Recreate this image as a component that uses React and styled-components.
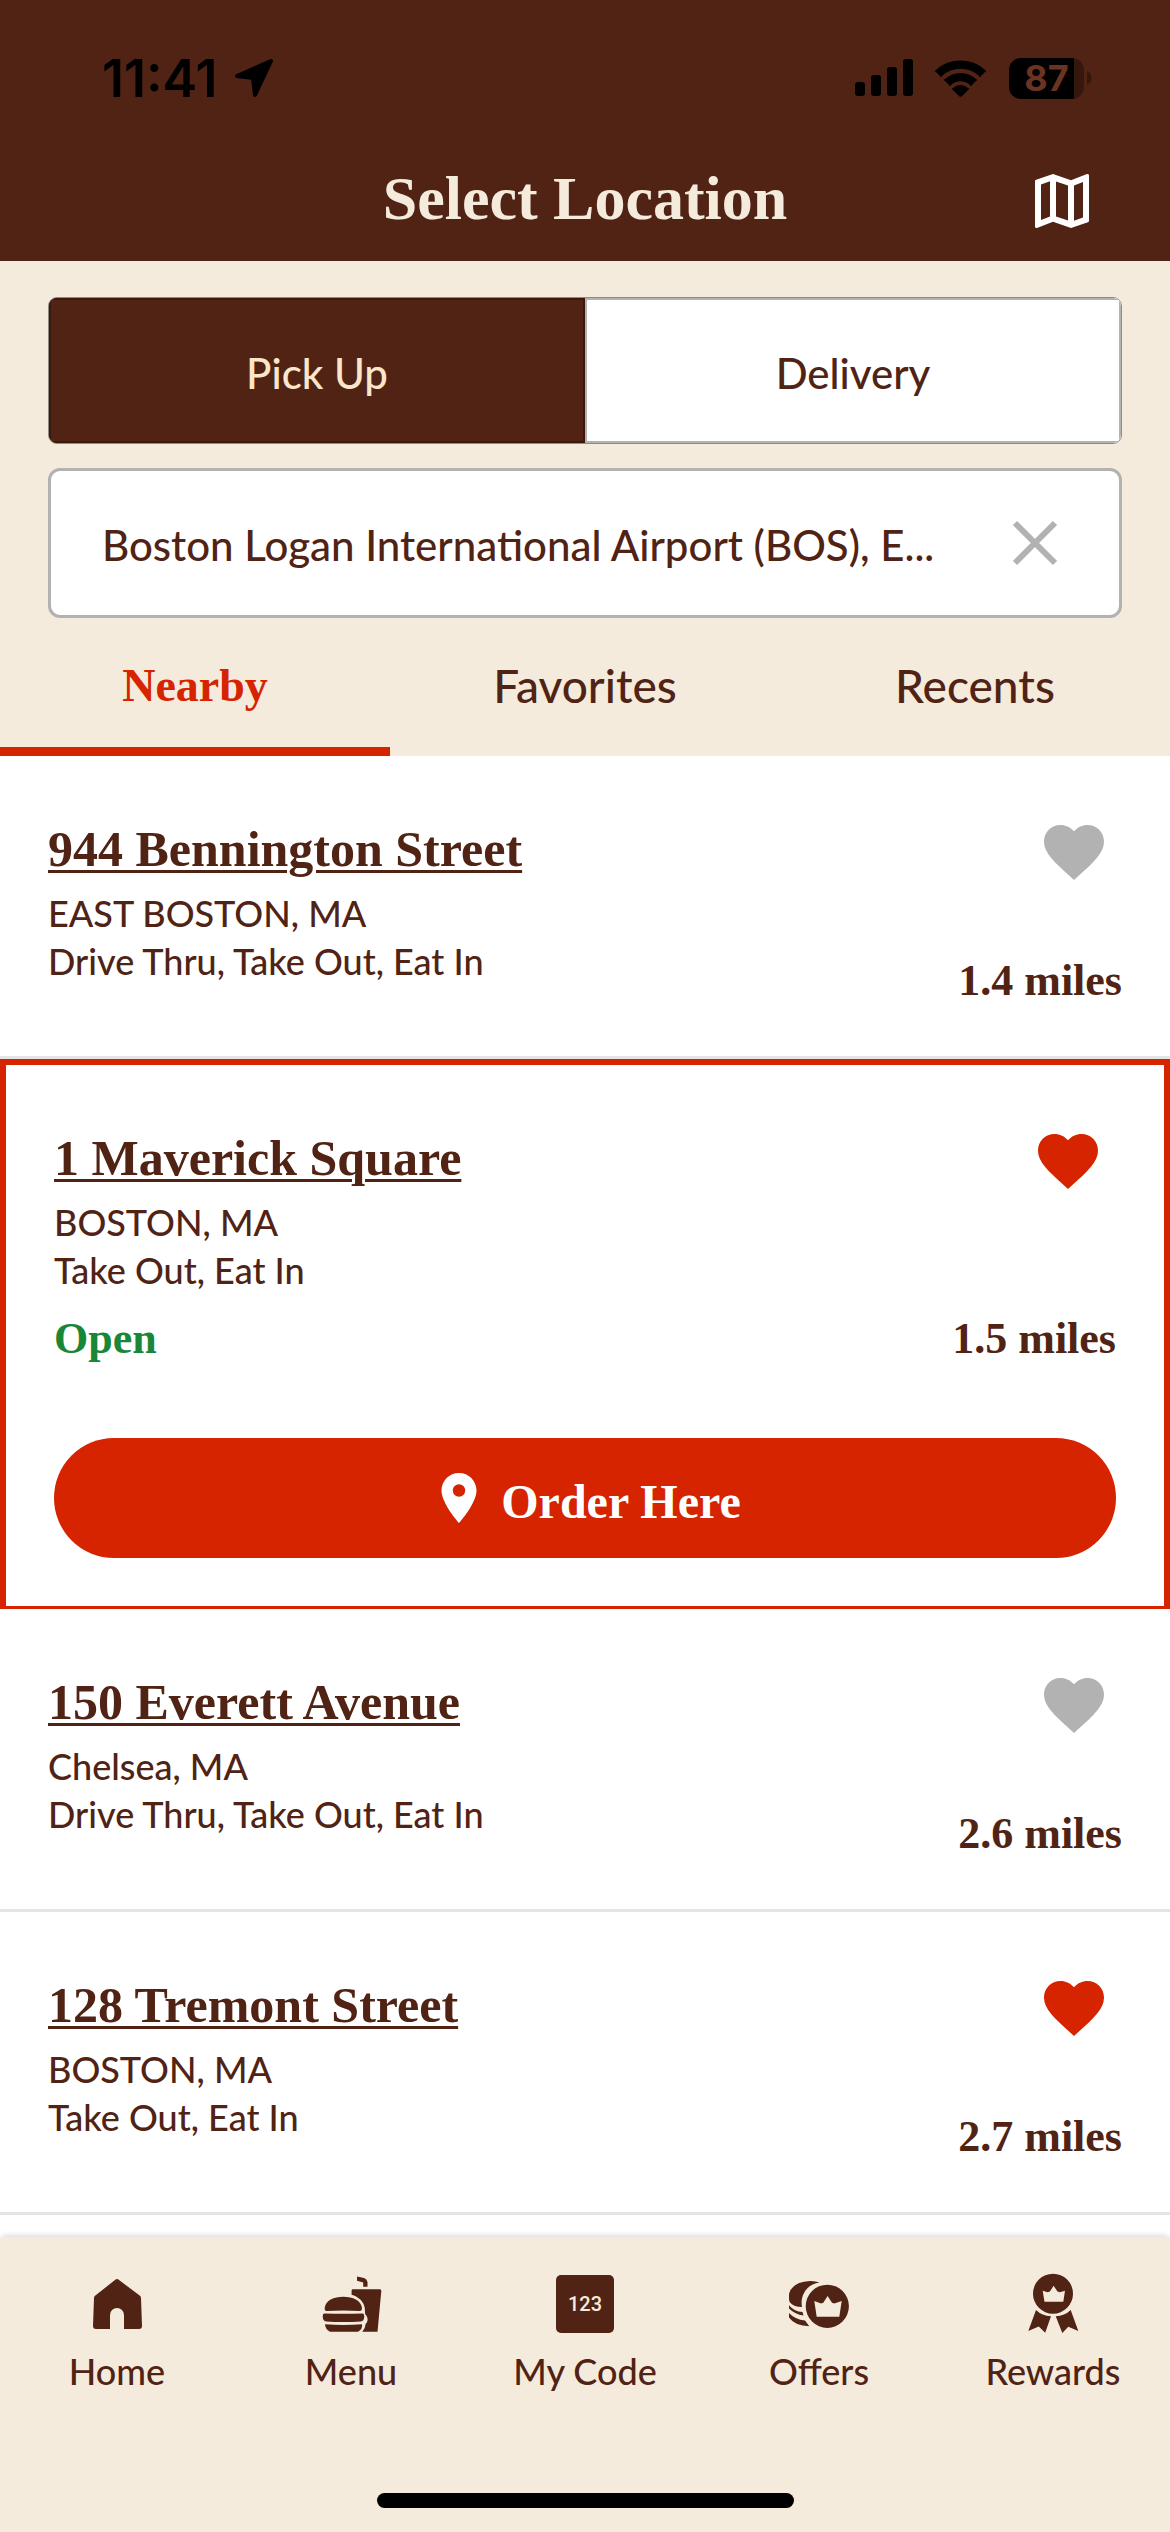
import React, { useState } from 'react';
import styled, { createGlobalStyle } from 'styled-components';
import { MdFavorite, MdOutlineMap, MdPlace } from 'react-icons/md';

const serif = `"Liberation Serif", "Times New Roman", serif`;
const sans = `Lato, "Liberation Sans", sans-serif`;

const restaurants = [
    { id: 1, street: "944 Bennington Street", city: "EAST BOSTON, MA", services: "Drive Thru, Take Out, Eat In", distance: "1.4 miles", favorite: false },
    { id: 2, street: "1 Maverick Square", city: "BOSTON, MA", services: "Take Out, Eat In", distance: "1.5 miles", favorite: true, status: "Open" },
    { id: 3, street: "150 Everett Avenue", city: "Chelsea, MA", services: "Drive Thru, Take Out, Eat In", distance: "2.6 miles", favorite: false },
    { id: 4, street: "128 Tremont Street", city: "BOSTON, MA", services: "Take Out, Eat In", distance: "2.7 miles", favorite: true },
];

const tabs = ["Nearby", "Favorites", "Recents"];

function StatusIcons() {
    return (
        <StatusGroup>
            <svg width="58" height="38" viewBox="0 0 58 38">
                <rect x="0" y="23" width="10" height="14" rx="3" />
                <rect x="16" y="16" width="10" height="21" rx="3" />
                <rect x="32" y="8" width="10" height="29" rx="3" />
                <rect x="48" y="0" width="10" height="37" rx="3" />
            </svg>
            <svg width="52" height="38" viewBox="0 0 52 38">
                <path d="M1 11a36 36 0 0 1 49 0 1 1 0 0 1 0 2l-4 4a1 1 0 0 1-2 0 27 27 0 0 0-37 0 1 1 0 0 1-2 0l-4-4a1 1 0 0 1 0-2z" />
                <path d="M10 20a23 23 0 0 1 31 0 1 1 0 0 1 0 2l-4 4a1 1 0 0 1-2 0 14 14 0 0 0-19 0 1 1 0 0 1-2 0l-4-4a1 1 0 0 1 0-2z" />
                <path d="M18 29a11 11 0 0 1 15 0 1 1 0 0 1 0 2l-6 6a2 2 0 0 1-3 0l-6-6a1 1 0 0 1 0-2z" />
            </svg>
            <Battery>
                <BatteryLevel>87</BatteryLevel>
                <svg width="5" height="14" viewBox="0 0 5 14">
                    <path d="M0 0c6 3 6 11 0 14z" fill="#35170d" />
                </svg>
            </Battery>
        </StatusGroup>
    );
}

function HomeIcon() {
    return (
        <svg width="72" height="72" viewBox="0 0 72 72" fill="currentColor">
            <path d="M34 12q2-2 4 0l20 15q2 1 2 3l1 28q0 3-3 3H43V47a7 7 0 0 0-14 0v14H15q-3 0-3-3l1-28q0-2 2-3z" />
        </svg>
    );
}

function MenuIcon() {
    return (
        <svg width="72" height="72" viewBox="0 0 72 72" fill="currentColor">
            <path d="M42 8.500l7 1.500q3 1 3.500 4v4.700h-4.300V14.500L42 12.700z" />
            <path d="M37.500 21.300H65q1.500 0 1.300 1.600L62.500 63.700H47.300q3-3 3.300-7.700 3-3 1.500-7-1-2-2-3 1-12-9-17.500-2-1.200-4.500-1.700v-4q0-1.500.9-1.500z" />
            <path d="M9.700 40c1-8 9-11.300 18.600-11.300S46 32 47 40q0 3-2 3-17-1-33.500 0-2 0-1.800-3z" />
            <path d="M8 46.500q.4-1.200 2-1.100 18.500.7 37 0 1.600 0 2 1.100.8 2.500-.3 5-.7 1.700-2.700 1.900-17.500 1-35 0-2-.2-2.700-1.900-1.100-2.500-.3-5z" />
            <path d="M10 56.300q18.500 1.200 37 0 1 4.700-4 7.400H15q-5-2.700-5-7.400z" />
        </svg>
    );
}

function OffersIcon() {
    return (
        <svg width="72" height="72" viewBox="0 0 72 72" fill="currentColor">
            <path fillRule="evenodd" d="M44.300 16.700a21.600 21.600 0 1 1 0 43.200 21.600 21.600 0 0 1 0-43.200zM31.300 33l2.400 15.700h22.600L58.700 33l-7.400 2.500-2.300-.7-4.400-6.700-4.300 6.700-2.300.7z" />
            <path d="M36.500 14.500Q22 17 19 30.500q-.8 4 0 8.500-8 0-12-4.500-1-1.500-1-4V26q3-12 21-13 5-.2 9.500 1.500z" />
            <path d="M6 37.200q5 6.200 13.500 6.800l1 3.500Q12 46.500 6 40.500z" />
            <path d="M6 45q6 6.500 16 7.500l4.300 5.700Q12 58 6 49.500z" />
        </svg>
    );
}

function RewardsIcon() {
    return (
        <svg width="72" height="72" viewBox="0 0 72 72" fill="currentColor">
            <path fillRule="evenodd" d="M36 5.700a20 20 0 1 1 0 40 20 20 0 0 1 0-40zM25.700 22.700l1.800 11h18.800l1.700-11-5.200 1.500-2.300-.7-3.900-5.700-3.700 5.700-2.300.7z" />
            <path d="M19 42q6 6 15 6.300l-5.800 16.400-6.500-6.300L11.300 63z" />
            <path d="M53.700 42q-6 6-15 6.300l6.600 16.800 6-6.300L61.300 63z" />
        </svg>
    );
}

function CodeTile() {
    return <Tile>123</Tile>;
}

const navItems = [
    { label: "Home", icon: <HomeIcon /> },
    { label: "Menu", icon: <MenuIcon /> },
    { label: "My Code", icon: <CodeTile /> },
    { label: "Offers", icon: <OffersIcon /> },
    { label: "Rewards", icon: <RewardsIcon /> },
];

function Restaurant({ item, onToggle }) {
    const selected = Boolean(item.status);

    return (
        <Row $selected={selected}>
            <Details>
                <Info>
                    <Street href="#">{item.street}</Street>
                    <Address>
                        {item.city}<br />{item.services}
                    </Address>
                    {item.status && <Status>{item.status}</Status>}
                </Info>
                <Side>
                    <HeartButton
                        type="button"
                        aria-label="Favorite"
                        aria-pressed={item.favorite}
                        $active={item.favorite}
                        onClick={() => onToggle(item.id)}
                    >
                        <MdFavorite />
                    </HeartButton>
                    <Distance>{item.distance}</Distance>
                </Side>
            </Details>
            {selected && (
                <OrderButton type="button">
                    <MdPlace />
                    <span>Order Here</span>
                </OrderButton>
            )}
        </Row>
    );
}

function App() {
    const [mode, setMode] = useState("Pick Up");
    const [tab, setTab] = useState("Nearby");
    const [search, setSearch] = useState("Boston Logan International Airport (BOS), E...");
    const [items, setItems] = useState(restaurants);

    const handleToggle = (id) => {
        setItems(items.map((item) => item.id === id ? { ...item, favorite: !item.favorite } : item));
    }

  return (
    <Page>
        <GlobalStyle />
        <Header>
            <StatusBar>
                <Clock>
                    11:41
                    <svg width="40" height="40" viewBox="0 0 40 40">
                        <path d="M37 3L3 18l16 2 2 17z" strokeWidth="4" stroke="#000" strokeLinejoin="round" />
                    </svg>
                </Clock>
                <StatusIcons />
            </StatusBar>
            <TitleBar>
                <h1>Select Location</h1>
                <MapButton type="button" aria-label="Map">
                    <MdOutlineMap />
                </MapButton>
            </TitleBar>
        </Header>
        <Filters>
            <Segments>
                {["Pick Up", "Delivery"].map((name) => (
                    <Segment key={name} type="button" aria-pressed={mode === name} $active={mode === name} onClick={() => setMode(name)}>
                        {name}
                    </Segment>
                ))}
            </Segments>
            <SearchBox>
                <input type="text" aria-label="Location" value={search} onChange={(e) => {setSearch(e.target.value)}} />
                <button type="button" aria-label="Clear" onClick={() => setSearch("")}>
                    <svg width="48" height="48" viewBox="0 0 48 48" stroke="#b2b2b2" strokeWidth="6">
                        <path d="M4 4l40 40M44 4L4 44" />
                    </svg>
                </button>
            </SearchBox>
        </Filters>
        <Tabs role="tablist">
            {tabs.map((name) => (
                <Tab key={name} type="button" role="tab" aria-selected={tab === name} $active={tab === name} onClick={() => setTab(name)}>
                    {name}
                </Tab>
            ))}
        </Tabs>
        <List>
            {items.map((item) => (
                <Restaurant key={item.id} item={item} onToggle={handleToggle} />
            ))}
        </List>
        <BottomBar>
            <Nav>
                {navItems.map((item) => (
                    <NavLink key={item.label} href="#">
                        {item.icon}
                        <span>{item.label}</span>
                    </NavLink>
                ))}
            </Nav>
            <HomeIndicator />
        </BottomBar>
    </Page>
  );
}

const GlobalStyle = createGlobalStyle`
    * {
        box-sizing: border-box;
    }
    body {
        margin: 0;
        background-color: #ffffff;
    }
    button, input {
        margin: 0;
        padding: 0;
        border: none;
        background: none;
        color: inherit;
        font: inherit;
    }
    button {
        cursor: pointer;
    }
    svg {
        display: block;
        flex-shrink: 0;
    }
`;

const Page = styled.div`
    display: flex;
    flex-direction: column;
    min-height: 100vh;
    color: #502314;
    font-family: ${sans};
    font-weight: 500;
`;

const Header = styled.header`
    background-color: #502314;
`;

const StatusBar = styled.div`
    display: flex;
    justify-content: space-between;
    align-items: center;
    height: 141px;
    padding: 15px 78px 0 102px;
    color: #000000;
    font-family: Inter, "Liberation Sans", sans-serif;
`;

const Clock = styled.div`
    display: flex;
    align-items: center;
    gap: 16px;
    font-size: 52px;
    font-weight: 600;
`;

const StatusGroup = styled.div`
    display: flex;
    align-items: center;
    gap: 22px;
`;

const Battery = styled.div`
    display: flex;
    align-items: center;
    gap: 3px;
`;

const BatteryLevel = styled.div`
    width: 75px;
    height: 41px;
    border-radius: 12px;
    background: linear-gradient(to right, #000000 65px, #35170d 65px);
    color: #6b3322;
    font-size: 36px;
    font-weight: 700;
    line-height: 41px;
    text-align: center;
`;

const TitleBar = styled.div`
    display: grid;
    grid-template-columns: 72px 1fr 72px;
    align-items: center;
    height: 120px;
    padding: 0 72px;
    h1 {
        grid-column: 2;
        margin: 0;
        padding-bottom: 6px;
        color: #f5ebdc;
        font-family: ${serif};
        font-size: 62px;
        font-weight: 700;
        line-height: 72px;
        text-align: center;
    }
`;

const MapButton = styled.button`
    color: #ffffff;
    font-size: 72px;
`;

const Filters = styled.div`
    display: flex;
    flex-direction: column;
    gap: 24px;
    padding: 36px 48px 0;
    background-color: #f5ebdc;
`;

const Segments = styled.div`
    display: grid;
    grid-template-columns: 1fr 1fr;
    height: 147px;
    border: 1px solid #8f8a84;
    border-radius: 9px;
    overflow: hidden;
`;

const Segment = styled.button`
    padding-top: 4px;
    border: 2px solid ${({ $active }) => ($active ? "#3b170c" : "#b2b2b2")};
    background-color: ${({ $active }) => ($active ? "#502314" : "#ffffff")};
    color: ${({ $active }) => ($active ? "#fbe6cc" : "#502314")};
    font-size: 42px;
    line-height: 48px;
`;

const SearchBox = styled.div`
    display: flex;
    align-items: center;
    gap: 24px;
    height: 150px;
    padding: 0 60px 0 51px;
    border: 3px solid #b2b2b2;
    border-radius: 12px;
    background-color: #ffffff;
    input {
        flex: 1;
        min-width: 0;
        padding-top: 4px;
        font-size: 42px;
        line-height: 48px;
        outline: none;
    }
`;

const Tabs = styled.div`
    display: grid;
    grid-template-columns: repeat(3, 1fr);
    height: 138px;
    background-color: #f5ebdc;
`;

const Tab = styled.button`
    padding-top: 6px;
    border-bottom: 9px solid ${({ $active }) => ($active ? "#d62300" : "transparent")};
    color: ${({ $active }) => ($active ? "#d62300" : "#502314")};
    font-family: ${({ $active }) => ($active ? serif : sans)};
    font-size: 46px;
    font-weight: ${({ $active }) => ($active ? 700 : 500)};
    line-height: 54px;
`;

const List = styled.main`
    flex: 1;
    background-color: #ffffff;
`;

const Row = styled.article`
    padding: 60px 48px 48px;
    border: solid #d62300;
    border-width: ${({ $selected }) => ($selected ? "6px 6px 3px" : "0 0 3px")};
    border-color: ${({ $selected }) => ($selected ? "#d62300" : "#e5e5e5")};
`;

const Details = styled.div`
    display: flex;
    justify-content: space-between;
    min-height: 192px;
`;

const Info = styled.div`
    display: flex;
    flex-direction: column;
    align-items: flex-start;
`;

const Street = styled.a`
    color: inherit;
    font-family: ${serif};
    font-size: 50px;
    font-weight: 700;
    line-height: 66px;
    text-decoration-thickness: 3px;
    text-underline-offset: 4px;
`;

const Address = styled.p`
    margin: 7px 0 0;
    font-size: 36px;
    line-height: 48px;
`;

const Status = styled.div`
    margin-top: 18px;
    color: #198737;
    font-family: ${serif};
    font-size: 44px;
    font-weight: 700;
    line-height: 54px;
`;

const Side = styled.div`
    display: flex;
    flex-direction: column;
    align-items: flex-end;
    justify-content: space-between;
`;

const HeartButton = styled.button`
    margin-right: 12px;
    color: ${({ $active }) => ($active ? "#d62300" : "#b2b2b2")};
    font-size: 72px;
`;

const Distance = styled.div`
    font-family: ${serif};
    font-size: 44px;
    font-weight: 700;
    line-height: 54px;
`;

const OrderButton = styled.button`
    display: flex;
    justify-content: center;
    align-items: center;
    gap: 12px;
    width: 100%;
    height: 120px;
    margin-top: 72px;
    border-radius: 60px;
    background-color: #d62300;
    color: #ffffff;
    font-family: ${serif};
    font-size: 48px;
    font-weight: 700;
    svg {
        font-size: 60px;
    }
    span {
        padding-top: 6px;
    }
`;

const BottomBar = styled.footer`
    padding: 31px 0 24px;
    border-radius: 6px 6px 0 0;
    background-color: #f5ebdc;
    box-shadow: 0 -1px 6px rgba(0, 0, 0, 0.18);
`;

const Nav = styled.nav`
    display: grid;
    grid-template-columns: repeat(5, 1fr);
`;

const NavLink = styled.a`
    display: flex;
    flex-direction: column;
    align-items: center;
    gap: 7px;
    color: #502314;
    font-size: 36px;
    line-height: 48px;
    text-decoration: none;
`;

const Tile = styled.div`
    width: 58px;
    height: 58px;
    margin: 7px;
    border-radius: 5px;
    background-color: #502314;
    color: #f5ebdc;
    font-family: Roboto, "Liberation Sans", sans-serif;
    font-size: 20px;
    line-height: 58px;
    text-align: center;
`;

const HomeIndicator = styled.div`
    width: 417px;
    height: 15px;
    margin: 98px auto 0;
    border-radius: 8px;
    background-color: #000000;
`;

export default App;
